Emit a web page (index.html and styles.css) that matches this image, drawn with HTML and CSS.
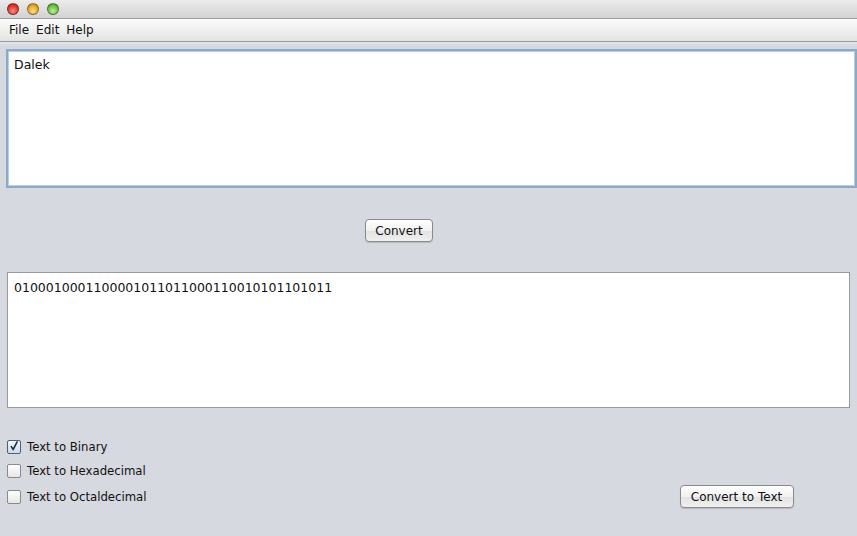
FILE: index.html
```html
<!DOCTYPE html>
<html>
<head>
<meta charset="utf-8">
<link rel="stylesheet" href="styles.css">
</head>
<body>
<div class="window">
  <div class="titlebar">
    <span class="light red"></span>
    <span class="light yellow"></span>
    <span class="light green"></span>
  </div>
  <div class="menubar">
    <span class="menu">File</span>
    <span class="menu">Edit</span>
    <span class="menu">Help</span>
  </div>
  <div class="content">
    <div class="input-area focused">Dalek</div>
    <div class="convert-row">
      <button class="btn convert">Convert</button>
    </div>
    <div class="output-area">0100010001100001011011000110010101101011</div>
    <div class="options">
      <div class="checks">
        <label class="check"><span class="box checked"><svg viewBox="0 0 14 14" width="14" height="14"><path d="M3.5 7.2 L6 11 L11 1.5" fill="none" stroke="#1a2a40" stroke-width="1.8"/></svg></span>Text to Binary</label>
        <label class="check"><span class="box"></span>Text to Hexadecimal</label>
        <label class="check"><span class="box"></span>Text to Octaldecimal</label>
      </div>
      <button class="btn to-text">Convert to Text</button>
    </div>
  </div>
</div>
</body>
</html>
```
FILE: styles.css
```css
* { box-sizing: border-box; }
html, body { margin: 0; padding: 0; }
body {
  width: 857px;
  height: 536px;
  overflow: hidden;
  background: #d6d9df;
  font-family: "DejaVu Sans", sans-serif;
  color: #111;
}
.window { display: flex; flex-direction: column; height: 536px; }
.titlebar {
  height: 19px;
  background: linear-gradient(#ececec, #d2d2d2);
  border-bottom: 1px solid #9c9c9c;
  display: flex;
  align-items: center;
  gap: 8px;
  padding-left: 7px;
  padding-bottom: 1px;
}
.light {
  width: 12px; height: 12px; border-radius: 50%;
  border: 1px solid rgba(0,0,0,0.35);
}
.red { background: radial-gradient(circle at 50% 70%, #ff8a80, #d8382e 60%, #a81e18); }
.yellow { background: radial-gradient(circle at 50% 70%, #ffe08a, #e0a52a 60%, #b07a10); }
.green { background: radial-gradient(circle at 50% 70%, #b8f09a, #6cbc45 60%, #3f8a22); }
.menubar {
  height: 23px;
  background: linear-gradient(#fbfbfb, #e4e4e4);
  border-bottom: 1px solid #9a9a9a;
  display: flex;
  align-items: center;
  gap: 7px;
  padding-left: 9px;
  font-size: 12px;
}
.menu { color: #111; }
.content {
  flex: 1;
  display: flex;
  flex-direction: column;
  padding: 7px 0 0 6px;
  box-shadow: inset 0 2px 0 #e2e4e8;
}
.input-area {
  height: 139px;
  background: #fff;
  border: 2px solid #8ca9cb;
  box-shadow: inset 0 0 0 1px #b9cde3;
  padding: 6px 6px;
  font-size: 12.5px;
  width: 851px;
}
.convert-row {
  display: flex;
  padding: 31px 0 0 359px;
}
.btn {
  font-family: "DejaVu Sans", sans-serif;
  font-size: 12px;
  color: #111;
  height: 23px;
  border: 1px solid #8a8a8a;
  border-radius: 4px;
  background: linear-gradient(#ffffff, #f1f1f1 50%, #e2e2e2 51%, #f0f0f0);
  box-shadow: 0 1px 1px rgba(0,0,0,0.15);
  padding: 0;
  white-space: nowrap;
}
.convert { width: 68px; }
.output-area {
  margin-top: 30px;
  margin-left: 1px;
  width: 843px;
  height: 136px;
  background: #fff;
  border: 1px solid #9a9a9a;
  padding: 7px 6px;
  font-size: 12.5px;
}
.options {
  display: flex;
  align-items: flex-end;
  padding-top: 31px;
}
.checks {
  display: flex;
  flex-direction: column;
  gap: 8px;
  margin-left: 1px;
}
.check {
  display: flex;
  align-items: center;
  gap: 6px;
  font-size: 11.7px;
  height: 16px;
}
.check:nth-child(3) { margin-top: 2px; }
.box {
  width: 14px; height: 14px;
  border: 1px solid #8a8a8a;
  border-radius: 2px;
  background: linear-gradient(#ffffff, #e6e6e6);
  display: flex; align-items: center; justify-content: center;
}
.box.checked { border-color: #4d5f7a; background: linear-gradient(#f4f7fb, #cfd8e6); }
.box svg { display: block; margin-top: -3px; }
.to-text { margin-left: 533px; width: 114px; flex: none; margin-bottom: -3px; }
```
